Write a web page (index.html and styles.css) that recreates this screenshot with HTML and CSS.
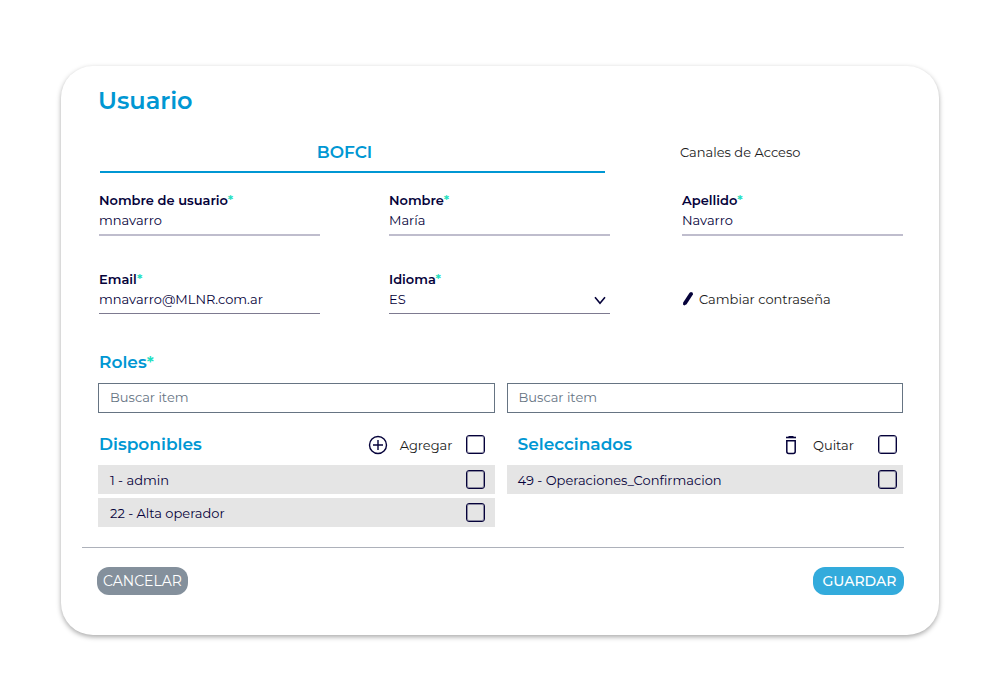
FILE: index.html
```html
<!DOCTYPE html>
<html lang="es">
<head>
<meta charset="utf-8">
<meta name="viewport" content="width=device-width, initial-scale=1">
<title>Usuario</title>
<link rel="stylesheet" href="styles.css">
</head>
<body>
<main class="card">
  <form>
    <h1 class="title">Usuario</h1>
    <nav class="tabs">
      <a class="tab tab-active" href="#bofci">BOFCI</a>
      <a class="tab" href="#canales">Canales de Acceso</a>
    </nav>
    <div class="fields">
      <div class="field">
        <label for="username">Nombre de usuario<span class="req">*</span></label>
        <input id="username" type="text" value="mnavarro">
      </div>
      <div class="field">
        <label for="name">Nombre<span class="req">*</span></label>
        <input id="name" type="text" value="María">
      </div>
      <div class="field">
        <label for="surname">Apellido<span class="req">*</span></label>
        <input id="surname" type="text" value="Navarro">
      </div>
      <div class="field field-dark">
        <label for="email">Email<span class="req">*</span></label>
        <input id="email" type="text" value="mnavarro@MLNR.com.ar">
      </div>
      <div class="field field-dark">
        <label for="language">Idioma<span class="req">*</span></label>
        <div class="select-wrap">
          <select id="language"><option>ES</option></select>
          <svg class="chevron" width="12" height="9" viewBox="0 0 12 9" fill="none" stroke="currentColor" stroke-width="1.6"><path d="M1 1.200 6 7.200 11 1.200"/></svg>
        </div>
      </div>
      <a class="password" href="#password">
        <svg width="12" height="16" viewBox="0 0 12 16"><path fill="currentColor" d="M7.600 1.800 9 .9 10.800 1.800 10.900 3.500 4.600 13.300 2.200 14.400 1 13.600 1.200 11.500z"/></svg>
        <span>Cambiar contraseña</span>
      </a>
    </div>

    <h2 class="heading">Roles<span class="req">*</span></h2>
    <div class="roles">
      <section>
        <input class="search" type="text" placeholder="Buscar item" aria-label="Buscar item disponible">
        <div class="list-head">
          <h3 class="heading">Disponibles</h3>
          <button class="action" type="button">
            <svg width="20" height="20" viewBox="0 0 20 20" fill="none" stroke="currentColor" stroke-width="1.4"><circle cx="10" cy="10" r="8.500"/><path d="M10 5v10M5 10h10"/></svg>
            <span>Agregar</span>
          </button>
          <input type="checkbox" aria-label="Todos los disponibles">
        </div>
        <ul class="list">
          <li><label for="role-1">1 - admin</label><input id="role-1" type="checkbox"></li>
          <li><label for="role-22">22 - Alta operador</label><input id="role-22" type="checkbox"></li>
        </ul>
      </section>
      <section class="selected">
        <input class="search" type="text" placeholder="Buscar item" aria-label="Buscar item seleccionado">
        <div class="list-head">
          <h3 class="heading">Seleccinados</h3>
          <button class="action" type="button">
            <svg width="12" height="20" viewBox="0 0 12 20" fill="none" stroke="currentColor"><path stroke-width="1.600" d="M1 2.500h10"/><path stroke-width="1" d="M3.500 1.500h5"/><path stroke-width="1.500" d="M1.800 5.800h8.400v10.700a2 2 0 0 1-2 2H3.800a2 2 0 0 1-2-2z"/></svg>
            <span>Quitar</span>
          </button>
          <input type="checkbox" aria-label="Todos los seleccionados">
        </div>
        <ul class="list">
          <li><label for="role-49">49 - Operaciones_Confirmacion</label><input id="role-49" type="checkbox"></li>
        </ul>
      </section>
    </div>

    <footer class="footer">
      <button class="btn btn-cancel" type="button">CANCELAR</button>
      <button class="btn btn-save" type="submit">GUARDAR</button>
    </footer>
  </form>
</main>
</body>
</html>
```
FILE: styles.css
```css
:root {
  --navy: #05023a;
  --blue: #0097d3;
  --slate: #667483;
}
* { box-sizing: border-box; }
body {
  margin: 0;
  padding: 66px 61px;
  background: #fff;
  color: var(--navy);
  font-family: Montserrat, Inter, "Open Sans", sans-serif;
  font-size: 13px;
  line-height: 20px;
}
h1, h2, h3, ul { margin: 0; padding: 0; }
a { color: inherit; text-decoration: none; }
input, select, button { font: inherit; color: inherit; margin: 0; }
button { cursor: pointer; }
.card {
  padding: 20px 36px 40px 37px;
  border-radius: 32px;
  background: #fff;
  box-shadow: 0 2px 5px rgba(0, 0, 0, .34);
}
.title {
  margin-bottom: 22px;
  color: var(--blue);
  font-size: 24px;
  font-weight: 600;
  line-height: 30px;
}
.tabs {
  display: grid;
  grid-template-columns: 505fr 223fr;
  column-gap: 75px;
  margin: 0 0 17px 2px;
}
.tab {
  padding: 0 0 7px;
  color: #1a1a1a;
  line-height: 28px;
}
.tab-active {
  padding: 0 16px 5px 0;
  border-bottom: 2px solid var(--blue);
  color: var(--blue);
  font-size: 17px;
  font-weight: 600;
  text-align: center;
}
.fields {
  display: grid;
  grid-template-columns: 290fr 293fr 221fr;
  row-gap: 33px;
  margin: 0 0 36px 1px;
}
.field {
  display: flex;
  flex-direction: column;
  width: 100%;
  max-width: 221px;
  border-bottom: 2px solid #bfbdcd;
}
.field label { font-weight: 600; }
.field-dark { border-bottom: 1px solid #7d7a90; }
.req { color: #1fe0c0; }
.field input, .field select {
  width: 100%;
  height: 24px;
  padding: 0 0 4px;
  border: 0;
  background: none;
  appearance: none;
  line-height: 20px;
}
.select-wrap { position: relative; }
.chevron { position: absolute; right: 4px; top: 7px; pointer-events: none; }
.password {
  display: flex;
  align-items: center;
  align-self: center;
  gap: 5px;
  padding-top: 14px;
}
.password span { color: #1a1a1a; }
.heading {
  margin-left: 1px;
  color: var(--blue);
  font-size: 17px;
  font-weight: 600;
  line-height: 24px;
}
.roles {
  display: grid;
  grid-template-columns: 1fr 1fr;
  gap: 12px;
  margin-top: 9px;
}
.search {
  display: block;
  width: 100%;
  height: 30px;
  padding: 0 11px 2px;
  border: 1px solid var(--slate);
  background: #fff;
}
.search::placeholder { color: var(--slate); opacity: 1; }
.list-head {
  display: flex;
  align-items: center;
  height: 52px;
  padding: 11px 10px 0 0;
}
.list-head .heading { margin-right: auto; padding-bottom: 2px; }
.action {
  display: flex;
  align-items: center;
  gap: 12px;
  margin-right: 13px;
  padding: 0;
  border: 0;
  background: none;
}
.action span { color: #1a1a1a; }
input[type="checkbox"] {
  width: 19px;
  height: 19px;
  flex: none;
  appearance: none;
  border: 1px solid var(--navy);
  border-radius: 3px;
  box-shadow: inset 0 0 0 1px rgba(5, 2, 58, .4);
}
input[type="checkbox"]:checked { background: var(--blue); }
.list {
  display: grid;
  gap: 4px;
  list-style: none;
}
.list li {
  display: flex;
  align-items: center;
  justify-content: space-between;
  height: 29px;
  padding: 0 10px 0 12px;
  background: #e5e5e5;
}
.selected .list-head { padding: 11px 6px 0 10px; }
.selected .action { gap: 16px; margin-right: 24px; }
.selected li { padding: 0 6px 0 11px; }
.footer {
  display: flex;
  justify-content: space-between;
  margin: 20px -1px 0 -16px;
  padding: 19px 0 0 15px;
  border-top: 1px solid #adb1ba;
}
.btn {
  min-width: 91px;
  height: 28px;
  padding: 0 6px;
  border: 0;
  border-radius: 12px;
  color: #fff;
  font-size: 14px;
}
.btn-cancel { background: #84909c; }
.btn-save { padding-left: 8px; background: #33abdc; font-weight: 500; }
```
